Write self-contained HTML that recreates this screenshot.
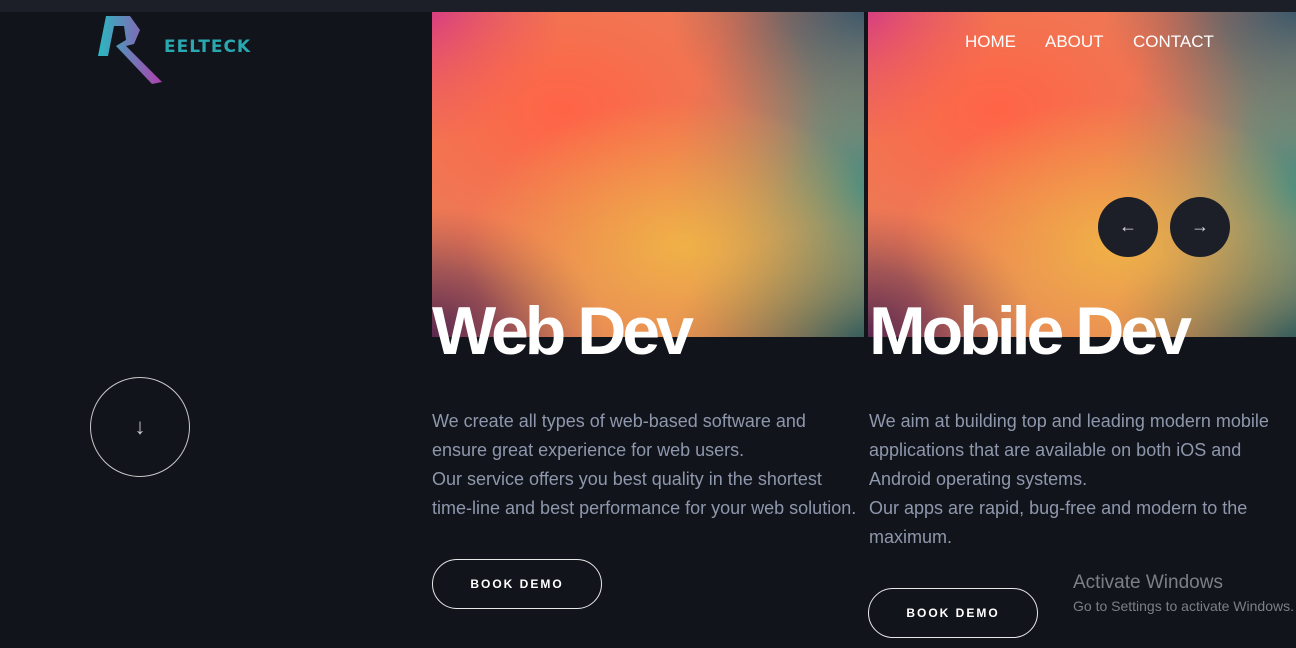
<!DOCTYPE html>
<html><head><style>
*{margin:0;padding:0;box-sizing:border-box}
body{width:1296px;height:648px;overflow:hidden;background:#12141c;font-family:"Liberation Sans",sans-serif;position:relative}
.top{position:absolute;left:0;top:0;width:1296px;height:12px;background:#1c1f28}
.img{position:absolute;top:12px;height:325px;
background:
radial-gradient(ellipse 50% 45% at 58% 72%,rgba(240,180,70,.95),rgba(240,180,70,0) 100%),
radial-gradient(ellipse 60% 55% at 30% 30%,rgba(255,100,70,1),rgba(255,100,70,0) 100%),
radial-gradient(ellipse 45% 70% at 100% 55%,rgba(70,140,130,1),rgba(70,140,130,0) 100%),
radial-gradient(ellipse 45% 40% at 100% 0%,rgba(60,75,100,1),rgba(60,75,100,0) 100%),
radial-gradient(ellipse 30% 40% at 0% 0%,rgba(200,50,150,1),rgba(200,50,150,0) 100%),
radial-gradient(ellipse 40% 40% at 0% 100%,rgba(90,40,80,1),rgba(90,40,80,0) 100%),
radial-gradient(ellipse 45% 35% at 100% 100%,rgba(50,70,70,1),rgba(50,70,70,0) 100%),
#e8805a}
h2{position:absolute;top:292px;color:#fff;font-size:68px;font-weight:bold;letter-spacing:-4px;font-family:"Liberation Sans",sans-serif}
p{position:absolute;color:#8e97ab;font-size:18px;line-height:29px}
.btn{position:absolute;width:170px;height:50px;border:1px solid #e8e8e8;border-radius:25px;color:#fff;font-size:12px;letter-spacing:2px;font-weight:bold;text-align:center;line-height:48px}
.nav{position:absolute;top:32px;color:#fff;font-size:17px}
.arr{position:absolute;top:197px;width:60px;height:60px;border-radius:50%;background:#1c1f28;color:#ddd;text-align:center;line-height:58px;font-size:18px}
</style></head><body>
<div class="top"></div>
<svg style="position:absolute;left:96px;top:14px" width="70" height="72" viewBox="0 0 70 72">
<defs><linearGradient id="g" x1="0" x2="1"><stop offset="0" stop-color="#2ab8c0"/><stop offset="1" stop-color="#b040b0"/></linearGradient></defs>
<path d="M10 2 L34 2 L44 16 L38 30 L30 32 L66 68 L56 70 L20 32 L30 26 L28 12 L18 12 L12 42 L2 42 Z" fill="url(#g)"/>
</svg>
<div style="position:absolute;left:164px;top:37px;color:#2aa8b0;font-weight:bold;font-size:17px;letter-spacing:1px;font-family:'DejaVu Sans',sans-serif">EELTECK</div>
<div style="position:absolute;left:90px;top:377px;width:100px;height:100px;border:1px solid #c8c8c8;border-radius:50%;color:#ccc;text-align:center;line-height:98px;font-size:22px">↓</div>
<div class="img" style="left:432px;width:432px"></div>
<div class="img" style="left:868px;width:428px"></div>
<div class="nav" style="left:965px">HOME</div>
<div class="nav" style="left:1045px">ABOUT</div>
<div class="nav" style="left:1133px">CONTACT</div>
<div class="arr" style="left:1098px">←</div>
<div class="arr" style="left:1170px">→</div>
<h2 style="left:432px">Web Dev</h2>
<h2 style="left:869px">Mobile Dev</h2>
<p style="left:432px;top:407px;width:432px">We create all types of web-based software and ensure great experience for web users.<br>Our service offers you best quality in the shortest time-line and best performance for your web solution.</p>
<p style="left:869px;top:407px;width:420px">We aim at building top and leading modern mobile applications that are available on both iOS and Android operating systems.<br>Our apps are rapid, bug-free and modern to the maximum.</p>
<div class="btn" style="left:432px;top:559px">BOOK DEMO</div>
<div class="btn" style="left:868px;top:588px">BOOK DEMO</div>
<div style="position:absolute;left:1073px;top:572px;color:#7c7f86;font-size:19px;white-space:nowrap">Activate Windows</div>
<div style="position:absolute;left:1073px;top:598px;color:#7c7f86;font-size:14px;white-space:nowrap">Go to Settings to activate Windows.</div>
</body></html>
